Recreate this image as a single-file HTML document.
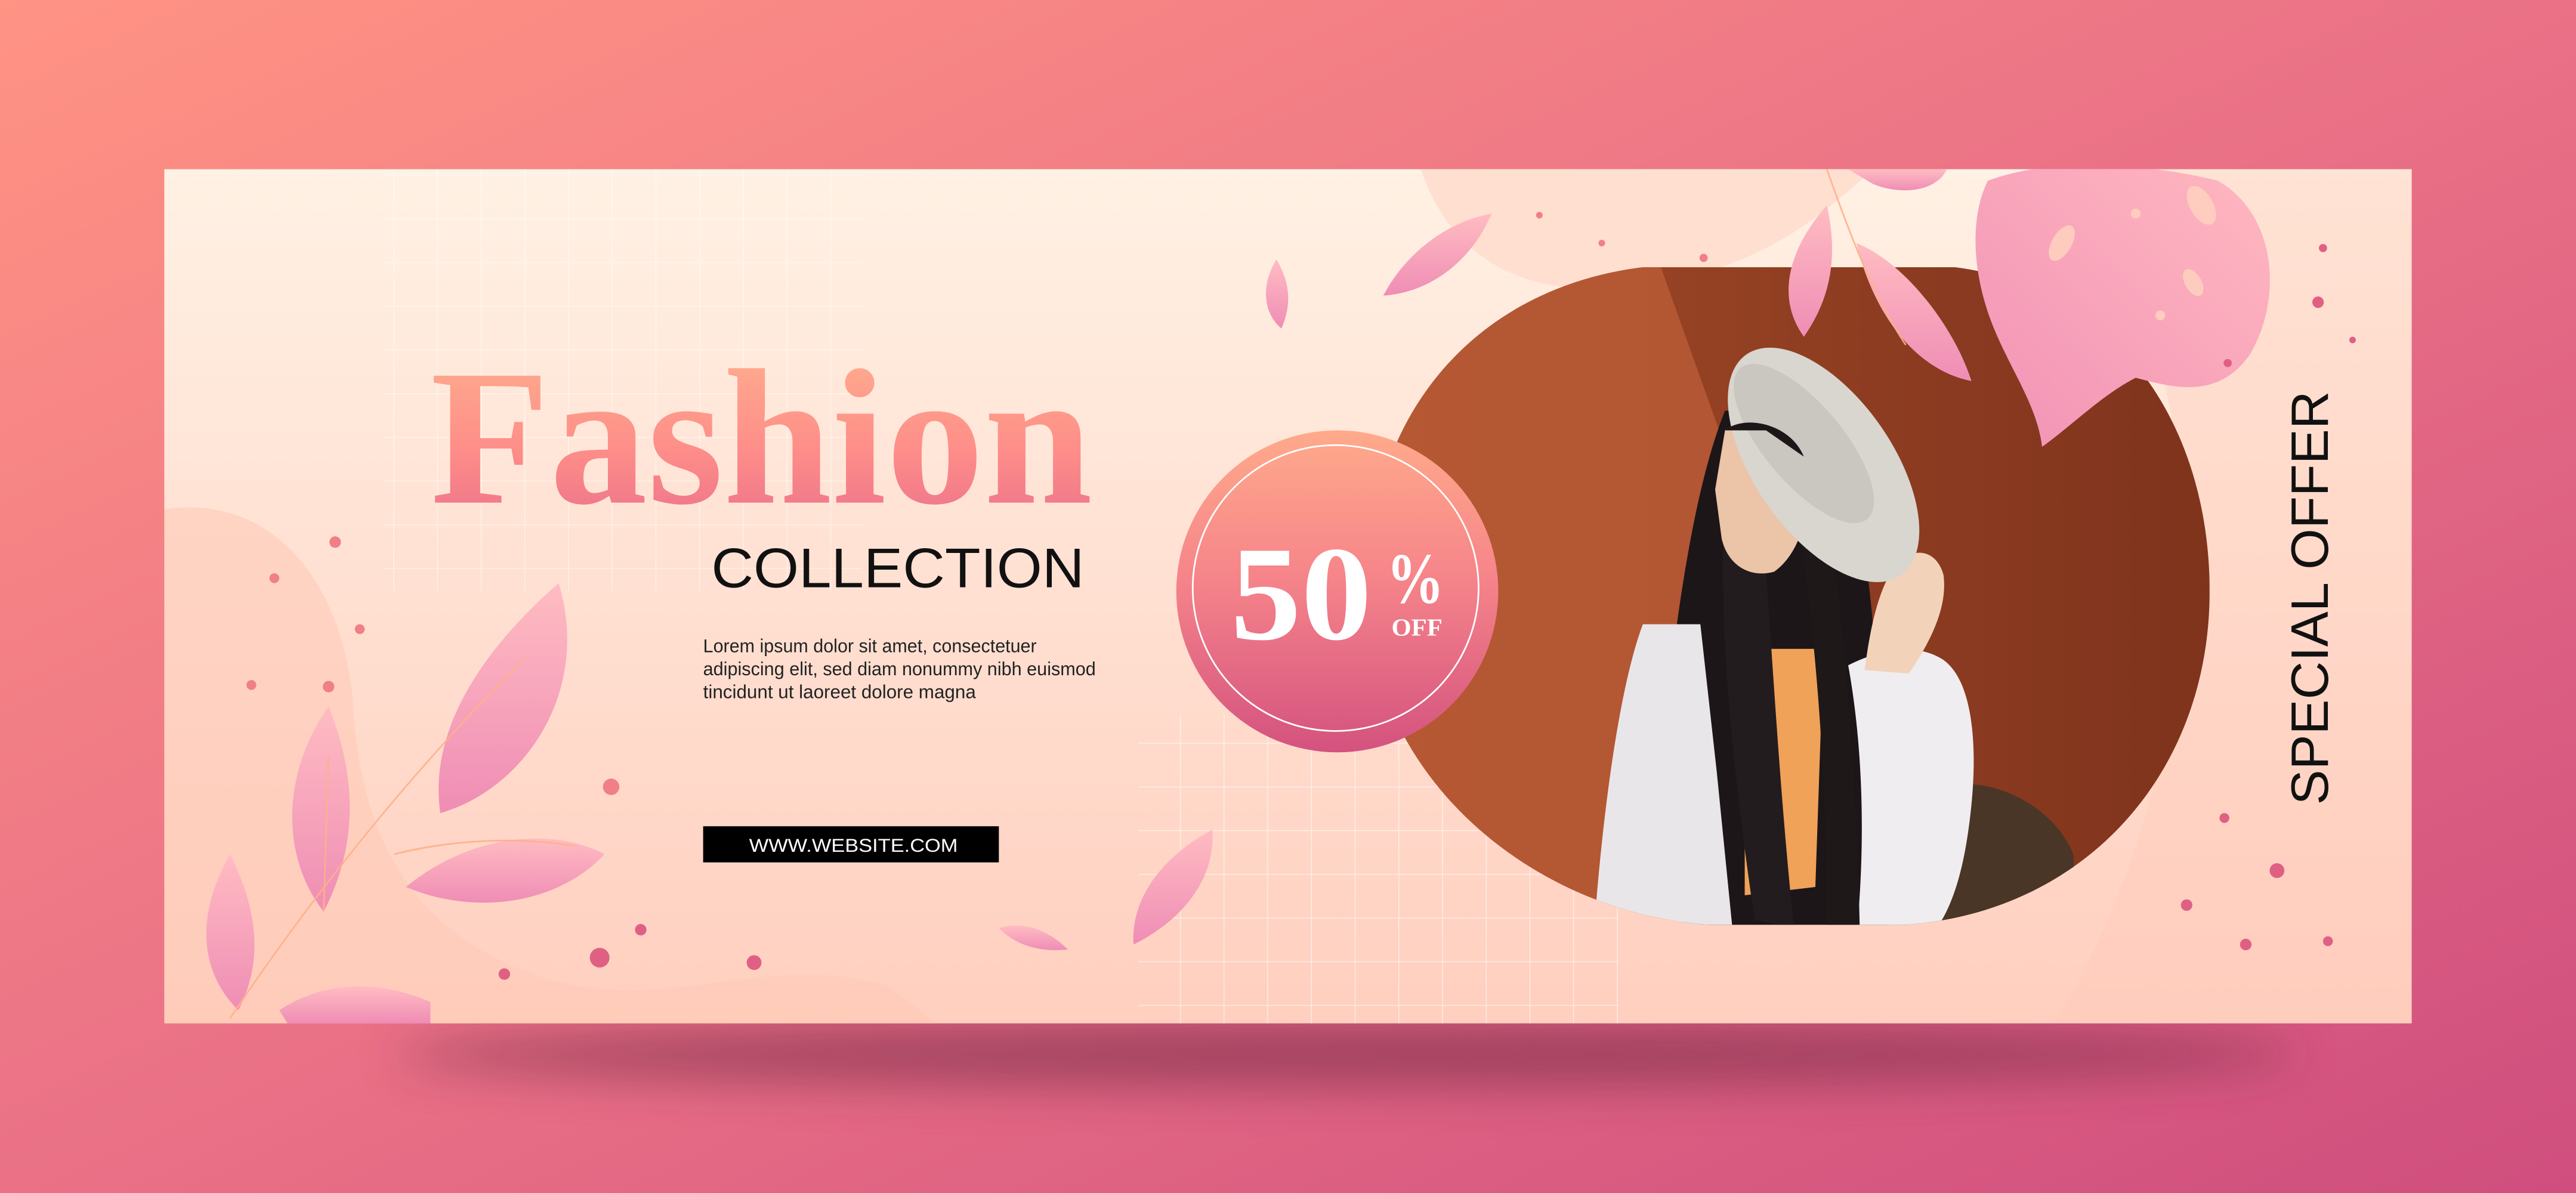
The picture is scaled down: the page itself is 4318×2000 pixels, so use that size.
<!DOCTYPE html>
<html><head><meta charset="utf-8"><style>
html,body{margin:0;padding:0;width:4318px;height:2000px;overflow:hidden;background:#e8738a}
svg{display:block}
</style></head><body>
<svg width="4318" height="2000" viewBox="0 0 1568 726.27" xmlns="http://www.w3.org/2000/svg">
<defs>
<linearGradient id="bg" x1="0" y1="0" x2="1" y2="1">
<stop offset="0" stop-color="#ff9384"/><stop offset="0.5" stop-color="#ea7186"/><stop offset="1" stop-color="#cf4e7e"/></linearGradient>
<linearGradient id="ban" x1="0" y1="0" x2="0" y2="1">
<stop offset="0" stop-color="#fff1e4"/><stop offset="1" stop-color="#ffcfbf"/></linearGradient>
<linearGradient id="fash" x1="0" y1="0" x2="0" y2="1">
<stop offset="0" stop-color="#ffb38f"/><stop offset="0.55" stop-color="#fe8e89"/><stop offset="1" stop-color="#e96c8a"/></linearGradient>
<linearGradient id="circ" x1="0" y1="0" x2="0" y2="1">
<stop offset="0" stop-color="#ffaa8b"/><stop offset="0.45" stop-color="#f6858a"/><stop offset="1" stop-color="#d4527f"/></linearGradient>
<linearGradient id="leaf" x1="0" y1="0" x2="0" y2="1">
<stop offset="0" stop-color="#ffbcc2"/><stop offset="1" stop-color="#ef8db5"/></linearGradient>
<linearGradient id="leaf2" x1="1" y1="0" x2="0" y2="1">
<stop offset="0" stop-color="#ffb8c0"/><stop offset="1" stop-color="#f292b6"/></linearGradient>
<linearGradient id="brown" x1="0" y1="0" x2="1" y2="0">
<stop offset="0" stop-color="#a24a28"/><stop offset="1" stop-color="#7f331c"/></linearGradient>
<clipPath id="bc"><rect x="100" y="103" width="1368" height="520"/></clipPath>
<clipPath id="photo"><path d="M1000 162.7 L1190 162.7 C1290 175 1345 260 1345 360 C1345 470 1270 555 1160 563 L1040 563 C930 555 832 470 832 360 C832 250 900 175 1000 162.7 Z"/></clipPath>
<filter id="blur" x="-20%" y="-100%" width="140%" height="300%"><feGaussianBlur stdDeviation="14"/></filter>
<pattern id="grid" width="26.6" height="26.6" patternUnits="userSpaceOnUse"><path d="M26.6 0 L0 0 0 26.6" fill="none" stroke="#fff" stroke-opacity="0.75" stroke-width="1"/></pattern>
</defs>
<rect width="1568" height="726.27" fill="url(#bg)"/>
<ellipse cx="820" cy="642" rx="580" ry="20" fill="#7a2e48" opacity="0.6" filter="url(#blur)"/>
<rect x="100" y="103" width="1368" height="520" fill="url(#ban)"/>
<g clip-path="url(#bc)">
<path d="M100 310 C170 300 210 360 215 430 C220 520 260 580 350 600 C420 612 470 580 540 600 L570 623 L100 623 Z" fill="#ffcab8" opacity="0.6"/>
<path d="M865 103 C880 150 920 180 980 175 C1060 170 1100 140 1140 103 Z" fill="#ffd8c8" opacity="0.7"/>
<path d="M1290 103 L1468 103 L1468 623 L1250 623 C1290 560 1320 470 1330 380 C1340 280 1300 180 1290 103 Z" fill="#ffc8b8" opacity="0.35"/>
<rect x="233" y="103" width="292" height="257" fill="url(#grid)" opacity="0.7"/>
<rect x="693" y="435" width="292" height="188" fill="url(#grid)" opacity="0.8"/>
<g clip-path="url(#photo)">
<rect x="830" y="160" width="520" height="410" fill="url(#brown)"/>
<path d="M830 160 L1010 160 L1060 300 L1020 560 L830 570 Z" fill="#b95a36" opacity="0.85"/>
<path d="M1180 480 C1210 470 1250 490 1262 520 L1265 570 L1150 570 Z" fill="#4a3626"/>
<!-- hair back -->
<path d="M1050 250 C1030 300 1020 380 1012 450 C1005 510 1015 555 1030 570 L1150 570 C1155 520 1150 450 1140 380 C1135 320 1125 280 1105 250 Z" fill="#1c1618"/>
<!-- shirt left -->
<path d="M1000 380 C985 420 975 500 970 570 L1055 570 L1045 470 L1035 380 Z" fill="#e9e6ea"/>
<!-- shirt right/sleeve -->
<path d="M1125 405 C1145 395 1165 392 1180 400 C1200 410 1204 450 1200 490 C1196 530 1188 555 1175 570 L1130 570 C1135 520 1135 460 1125 405 Z" fill="#efedf0"/>
<path d="M1062 395 L1110 395 L1105 540 L1062 545 Z" fill="#f0a259"/>
<path d="M1050 300 C1045 380 1055 470 1068 560 L1092 565 C1082 470 1078 380 1072 310 Z" fill="#231c1e"/>
<path d="M1092 300 C1105 380 1112 470 1112 565 L1132 565 C1130 470 1122 380 1112 300 Z" fill="#1e1819"/>
<!-- face -->
<path d="M1050 262 C1062 252 1090 258 1098 278 C1104 305 1098 335 1080 348 C1066 352 1052 345 1048 328 L1044 298 Z" fill="#ecc4a8"/>
<!-- hand -->
<path d="M1150 350 C1160 332 1178 332 1183 350 C1186 372 1172 395 1162 410 L1135 408 C1138 385 1142 365 1150 350 Z" fill="#f3d2ba"/>
<!-- hat -->
<ellipse cx="1110" cy="283" rx="82" ry="42" transform="rotate(55 1110 283)" fill="#d8d6ce"/>
<ellipse cx="1098" cy="270" rx="60" ry="24" transform="rotate(50 1098 270)" fill="#c9c7bf"/>
<path d="M1050 262 C1062 252 1090 258 1098 278 L1075 262 Z" fill="#1c1618"/>
</g>
<g fill="url(#leaf)">
<path d="M340 355 C360 420 320 480 268 495 C260 440 300 390 340 355 Z"/>
<path d="M200 430 C220 480 215 520 197 555 C170 520 172 470 200 430 Z"/>
<path d="M140 520 C160 560 158 590 145 615 C120 590 120 555 140 520 Z"/>
<path d="M247 540 C290 505 340 505 368 520 C340 550 290 558 247 540 Z"/>
<path d="M170 615 C200 595 235 598 262 610 L262 623 L175 623 Z"/>
<path d="M908 130 C895 160 870 178 842 180 C855 155 880 135 908 130 Z"/>
<path d="M777 158 C787 175 785 188 780 200 C768 190 768 172 777 158 Z"/>
<path d="M738 505 C740 535 720 560 690 575 C688 545 710 520 738 505 Z"/>
<path d="M608 565 C625 560 640 568 650 578 C632 580 618 575 608 565 Z"/>
<path d="M1112 125 C1120 160 1112 185 1098 205 C1080 180 1090 150 1112 125 Z"/>
<path d="M1130 148 C1160 160 1190 200 1200 232 C1165 225 1140 190 1130 148 Z"/>
<path d="M1125 103 L1185 103 C1180 115 1160 120 1140 112 Z"/>
</g>
<path d="M1210 110 C1250 95 1310 100 1350 110 C1385 130 1390 180 1370 215 C1350 245 1320 235 1300 230 C1280 240 1260 260 1243 272 C1240 245 1220 220 1210 190 C1200 160 1200 130 1210 110 Z" fill="url(#leaf2)"/>
<g fill="#ffd0c0" opacity="0.9">
<ellipse cx="1340" cy="125" rx="7" ry="13" transform="rotate(-30 1340 125)"/>
<ellipse cx="1255" cy="148" rx="6" ry="12" transform="rotate(30 1255 148)"/>
<ellipse cx="1335" cy="172" rx="5" ry="9" transform="rotate(-30 1335 172)"/>
<circle cx="1300" cy="130" r="3"/><circle cx="1315" cy="192" r="3"/>
</g>
<g stroke="#ffb08a" stroke-width="1" fill="none" opacity="0.9">
<path d="M140 620 C180 560 240 480 320 400"/>
<path d="M197 555 L200 460"/><path d="M240 520 C280 510 320 510 350 515"/>
<path d="M1112 103 C1125 140 1140 180 1160 210"/>
</g>
<g fill="#f07f86">
<circle cx="204" cy="330" r="3.5"/><circle cx="167" cy="352" r="3"/><circle cx="219" cy="383" r="3"/>
<circle cx="153" cy="417" r="3"/><circle cx="200" cy="418" r="3.5"/><circle cx="372" cy="479" r="5"/>
<circle cx="937" cy="131" r="2"/><circle cx="975" cy="148" r="2"/><circle cx="1037" cy="157" r="2.5"/>
</g>
<g fill="#e06084">
<circle cx="390" cy="566" r="3.5"/><circle cx="365" cy="583" r="6"/><circle cx="307" cy="593" r="3.5"/><circle cx="459" cy="586" r="4.5"/>
<circle cx="1414" cy="151" r="2.5"/><circle cx="1411" cy="184" r="3.5"/><circle cx="1356" cy="221" r="2.5"/><circle cx="1432" cy="207" r="2"/>
<circle cx="1354" cy="498" r="3"/><circle cx="1386" cy="530" r="4.5"/><circle cx="1331" cy="551" r="3.5"/><circle cx="1367" cy="575" r="3.5"/><circle cx="1417" cy="573" r="3"/>
</g>
</g>
<text x="262" y="306" font-family="Liberation Serif, serif" font-weight="bold" font-size="118" fill="url(#fash)" textLength="403" lengthAdjust="spacingAndGlyphs">Fashion</text>
<text x="433" y="357.5" font-family="Liberation Sans, sans-serif" font-size="34" fill="#111" textLength="227" lengthAdjust="spacingAndGlyphs">COLLECTION</text>
<g font-family="Liberation Sans, sans-serif" font-size="11.5" fill="#222">
<text x="428" y="397" textLength="203" lengthAdjust="spacingAndGlyphs">Lorem ipsum dolor sit amet, consectetuer</text>
<text x="428" y="411" textLength="239" lengthAdjust="spacingAndGlyphs">adipiscing elit, sed diam nonummy nibh euismod</text>
<text x="428" y="425" textLength="166" lengthAdjust="spacingAndGlyphs">tincidunt ut laoreet dolore magna</text>
</g>
<rect x="428" y="503" width="180" height="22" fill="#000"/>
<text x="456" y="518.5" font-family="Liberation Sans, sans-serif" font-size="11.5" fill="#fff" textLength="127" lengthAdjust="spacingAndGlyphs">WWW.WEBSITE.COM</text>
<circle cx="814" cy="360" r="98" fill="url(#circ)"/>
<circle cx="813" cy="358" r="87" fill="none" stroke="#fff" stroke-width="1"/>
<text x="749" y="389" font-family="Liberation Serif, serif" font-weight="bold" font-size="82" fill="#fff" textLength="86" lengthAdjust="spacingAndGlyphs">50</text>
<text x="844" y="367" font-family="Liberation Serif, serif" font-weight="bold" font-size="44" fill="#fff" textLength="35" lengthAdjust="spacingAndGlyphs">%</text>
<text x="847" y="387" font-family="Liberation Serif, serif" font-weight="bold" font-size="15" fill="#fff" textLength="31" lengthAdjust="spacingAndGlyphs">OFF</text>
<text transform="translate(1417 490) rotate(-90)" font-family="Liberation Sans, sans-serif" font-size="32" fill="#111" textLength="252" lengthAdjust="spacingAndGlyphs">SPECIAL OFFER</text>
</svg>
</body></html>
